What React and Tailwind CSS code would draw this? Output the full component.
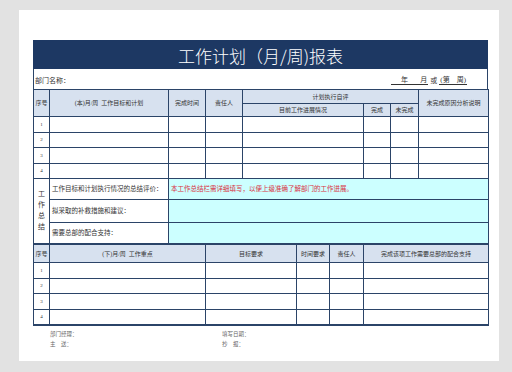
import React from 'react';

const line = 'border border-[#2b4468]';
const head = `${line} bg-[#d7e1ef] text-center font-normal`;

const topRows = [1, 2, 3, 4];

function App() {
  return (
    <div
      className="w-[512px] h-[372px] bg-[#e2e2e2] pt-[10px] pl-[19px]"
      style={{ fontFamily: '"Liberation Serif", "Noto Sans CJK SC", serif' }}
    >
      <div className="w-[480px] h-[351px] bg-white pt-[30px] pl-[14px]">
        <div className="w-[455px] text-[#333] text-[6px] leading-none">
          {/* Title bar */}
          <div
            className="h-[29px] bg-[#1d3863] text-white text-[17px] font-light flex items-center justify-center pt-[1px]"
            style={{ fontFamily: '"Noto Sans CJK SC", sans-serif' }}
          >
            工作计划（月/周)报表
          </div>

          {/* Department line */}
          <div className="h-[20px] border-x border-[#2b4468] flex items-end justify-between pb-[4px] pl-[1px] pr-[20px] text-[7px]">
            <span>部门名称：</span>
            <span className="flex items-end">
              <span className="border-b border-[#333] pl-[10px] pr-[1px]">年&nbsp;&nbsp;&nbsp;&nbsp;&nbsp;&nbsp;&nbsp;月</span>
              <span className="px-[2px]">或</span>
              <span className="border-b border-[#333] px-[1px]">(第&nbsp;&nbsp;&nbsp;&nbsp;周)</span>
            </span>
          </div>

          {/* Plan table */}
          <table className="w-[455px] table-fixed border-collapse">
            <colgroup>
              <col className="w-[16px]" />
              <col className="w-[119px]" />
              <col className="w-[37px]" />
              <col className="w-[37px]" />
              <col className="w-[121px]" />
              <col className="w-[27px]" />
              <col className="w-[28px]" />
              <col className="w-[70px]" />
            </colgroup>
            <tbody>
              <tr className="h-[14px]">
                <td rowSpan={2} className={head}>序号</td>
                <td rowSpan={2} className={head}>(本)月/周&nbsp;&nbsp;工作目标和计划</td>
                <td rowSpan={2} className={head}>完成时间</td>
                <td rowSpan={2} className={head}>责任人</td>
                <td colSpan={3} className={head}>计划执行自评</td>
                <td rowSpan={2} className={head}>未完成原因分析说明</td>
              </tr>
              <tr className="h-[13px]">
                <td className={head}>目前工作进展情况</td>
                <td className={head}>完成</td>
                <td className={head}>未完成</td>
              </tr>
              {topRows.map((n) => (
                <tr key={n} className="h-[15.5px]">
                  <td className={`${line} text-center text-[5px]`}>{n}</td>
                  <td className={line}></td>
                  <td className={line}></td>
                  <td className={line}></td>
                  <td className={line}></td>
                  <td className={line}></td>
                  <td className={line}></td>
                  <td className={line}></td>
                </tr>
              ))}
              <tr className="h-[21px]">
                <td rowSpan={3} className={`${line} text-center text-[7px] leading-[11px]`}>
                  工<br />作<br />总<br />结
                </td>
                <td className={`${line} pl-[2px] text-[6.5px]`}>工作目标和计划执行情况的总结评价：</td>
                <td colSpan={6} className={`${line} bg-[#ccffff] pl-[2px] text-[6.5px] text-[#d9343f]`}>
                  本工作总结栏需详细填写，以便上级准确了解部门的工作进展。
                </td>
              </tr>
              <tr className="h-[23px]">
                <td className={`${line} pl-[2px] text-[6.5px]`}>拟采取的补救措施和建议：</td>
                <td colSpan={6} className={`${line} bg-[#ccffff]`}></td>
              </tr>
              <tr className="h-[21px]">
                <td className={`${line} pl-[2px] text-[6.5px]`}>需要总部的配合支持：</td>
                <td colSpan={6} className={`${line} bg-[#ccffff]`}></td>
              </tr>
            </tbody>
          </table>

          {/* Next period table */}
          <table className="w-[455px] table-fixed border-collapse border-b-2 border-[#2b4468]">
            <colgroup>
              <col className="w-[16px]" />
              <col className="w-[156px]" />
              <col className="w-[91px]" />
              <col className="w-[33px]" />
              <col className="w-[34px]" />
              <col className="w-[125px]" />
            </colgroup>
            <tbody>
              <tr className="h-[18px]">
                <td className={head}>序号</td>
                <td className={head}>(下)月/周&nbsp;&nbsp;工作重点</td>
                <td className={head}>目标要求</td>
                <td className={head}>时间要求</td>
                <td className={head}>责任人</td>
                <td className={head}>完成该项工作需要总部的配合支持</td>
              </tr>
              {topRows.map((n) => (
                <tr key={n} className="h-[15.5px]">
                  <td className={`${line} text-center text-[5px]`}>{n}</td>
                  <td className={line}></td>
                  <td className={line}></td>
                  <td className={line}></td>
                  <td className={line}></td>
                  <td className={line}></td>
                </tr>
              ))}
            </tbody>
          </table>

          {/* Sign-off */}
          <div className="grid grid-cols-[172px_1fr] pl-[17px] pt-[3px] text-[#666] text-[5.5px] leading-[10px]">
            <span>部门经理：</span>
            <span>填写日期：</span>
            <span>主&nbsp;&nbsp;&nbsp;&nbsp;送：</span>
            <span>抄&nbsp;&nbsp;&nbsp;&nbsp;报：</span>
          </div>
        </div>
      </div>
    </div>
  );
}

export default App;
